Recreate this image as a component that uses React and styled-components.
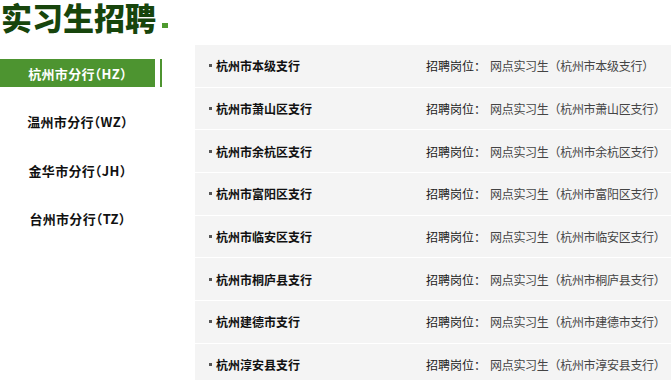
import React from "react";
import styled, { createGlobalStyle } from "styled-components";

const GlobalStyle = createGlobalStyle`
  body {
    margin: 0;
    background: #fff;
    font-family: "Liberation Sans", "Noto Sans CJK SC", sans-serif;
  }
`;

const branches = [
  { name: "杭州市分行（HZ）", active: true },
  { name: "温州市分行（WZ）" },
  { name: "金华市分行（JH）" },
  { name: "台州市分行（TZ）" },
];

const jobs = [
  { name: "杭州市本级支行", place: "杭州市本级支行" },
  { name: "杭州市萧山区支行", place: "杭州市萧山区支行" },
  { name: "杭州市余杭区支行", place: "杭州市余杭区支行" },
  { name: "杭州市富阳区支行", place: "杭州市富阳区支行" },
  { name: "杭州市临安区支行", place: "杭州市临安区支行" },
  { name: "杭州市桐庐县支行", place: "杭州市桐庐县支行" },
  { name: "杭州建德市支行", place: "杭州市建德市支行" },
  { name: "杭州淳安县支行", place: "杭州市淳安县支行" },
];

const App = () => {
  return (
    <Page>
      <GlobalStyle />
      <Header>
        <Title>实习生招聘</Title>
        <Dot />
      </Header>
      <Body>
        <Sidebar>
          {branches.map((b) => (
            <Tab key={b.name}>
              <TabLabel active={b.active}>{b.name}</TabLabel>
              {b.active && <TabMark />}
            </Tab>
          ))}
        </Sidebar>
        <List>
          {jobs.map((job) => (
            <Row key={job.name}>
              <Name>
                <Bullet />
                {job.name}
              </Name>
              <Post>
                <PostLabel>招聘岗位：</PostLabel>
                <PostValue>网点实习生（{job.place}）</PostValue>
              </Post>
            </Row>
          ))}
        </List>
      </Body>
    </Page>
  );
};

const Page = styled.div`
  width: 671px;
  height: 380px;
  overflow: hidden;
`;

const Header = styled.div`
  height: 45px;
  display: flex;
  align-items: flex-start;
  padding-left: 1px;
`;

const Title = styled.h1`
  margin: 0;
  font-family: "Noto Sans CJK SC", sans-serif;
  font-size: 31px;
  font-weight: 900;
  line-height: 33px;
  color: #17450c;
`;

const Dot = styled.span`
  width: 6px;
  height: 5px;
  background: #4e9a2f;
  margin: 23px 0 0 6px;
`;

const Body = styled.div`
  display: flex;
`;

const Sidebar = styled.div`
  width: 195px;
  flex-shrink: 0;
  padding-top: 14px;
  display: flex;
  flex-direction: column;
  gap: 20.5px;
`;

const Tab = styled.div`
  display: flex;
  align-items: stretch;
  height: 28px;
`;

const TabLabel = styled.div`
  width: 155px;
  display: flex;
  align-items: center;
  justify-content: center;
  background: ${(p) => (p.active ? "#4d9430" : "transparent")};
  color: ${(p) => (p.active ? "#fff" : "#111")};
  font-family: "Noto Sans CJK SC", sans-serif;
  font-size: 13px;
  font-weight: 700;
  font-feature-settings: "halt";
  letter-spacing: 0.3px;
`;

const TabMark = styled.div`
  width: 2px;
  margin-left: 5px;
  background: #4d9430;
`;

const List = styled.div`
  flex: 1;
  display: flex;
  flex-direction: column;
`;

const Row = styled.div`
  height: 41.7px;
  flex-shrink: 0;
  border-bottom: 1px solid #fff;
  background: #f4f4f4;
  display: flex;
  align-items: center;
  font-family: "Noto Sans CJK SC", sans-serif;
  font-size: 12px;
`;

const Name = styled.div`
  width: 217px;
  padding-left: 14px;
  display: flex;
  align-items: center;
  font-weight: 700;
  color: #111;
`;

const Bullet = styled.span`
  width: 3px;
  height: 3px;
  background: #555;
  margin-right: 4px;
`;

const Post = styled.div`
  display: flex;
  white-space: nowrap;
`;

const PostLabel = styled.span`
  color: #222;
  padding-right: 4px;
`;

const PostValue = styled.span`
  color: #444;
  letter-spacing: -0.3px;
`;

export default App;
